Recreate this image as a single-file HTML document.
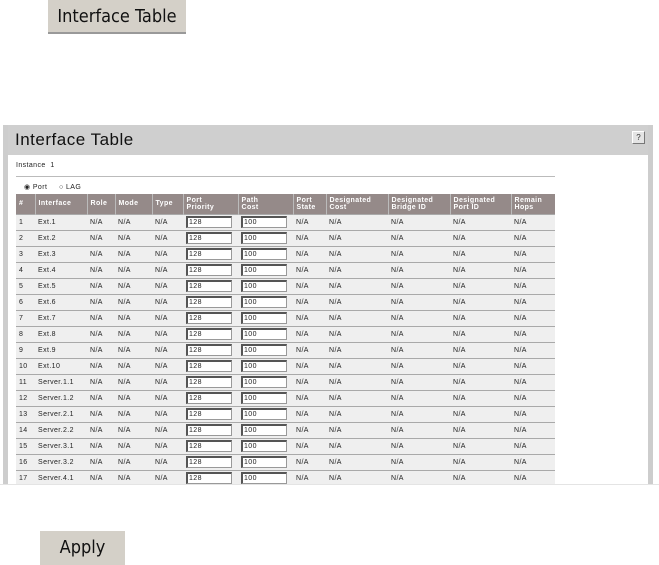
<!DOCTYPE html>
<html><head><style>
*{margin:0;padding:0;box-sizing:border-box}
body{width:659px;height:565px;background:#fff;position:relative;overflow:hidden;font-family:"Liberation Sans",sans-serif}
.btn{position:absolute;background:#d4d0c8;color:#111;font-family:"DejaVu Sans Condensed","Liberation Sans",sans-serif;text-align:center}
#panel{position:absolute;left:3px;top:125px;width:650px;height:359px;background:#fff;border-left:5px solid #cdcdcd;border-right:5px solid #cdcdcd;overflow:hidden}
#tbar{position:absolute;left:-5px;top:0;width:650px;height:30px;background:#cfcfcf}
#tbar span{position:absolute;left:12px;top:5px;font-size:17px;color:#111;letter-spacing:.5px}
#help{position:absolute;left:629px;top:6px;width:13px;height:13px;background:#e4e4e4;border:1px solid #fff;border-right-color:#777;border-bottom-color:#777;font-size:8px;text-align:center;line-height:11px;color:#333}
.sm{position:absolute;font-size:7px;color:#222;letter-spacing:.4px}
table{position:absolute;left:8px;top:69px;border-collapse:collapse;font-size:7px;color:#222;table-layout:fixed;letter-spacing:.4px}
th{background:#958a89;color:#fff;font-weight:bold;text-align:left;height:20px;padding:0 3px;line-height:7px;border-left:1px solid #bbb;vertical-align:middle}
th:first-child{border-left:none}
td{background:#efefef;height:16px;padding:0 3px;border-top:1px solid #a9a9a9;white-space:nowrap}
.in{display:block;width:46px;height:12px;background:#fff;border:1px solid #999;border-left:2px solid #555;border-top:2px solid #555;font-size:7px;line-height:9px;padding-left:1px}
</style></head><body>
<div class="btn" style="left:48px;top:0;width:138px;height:34px;font-size:18px;line-height:34px;border-bottom:2px solid #999">Interface Table</div>
<div id="panel">
<div id="tbar"><span>Interface Table</span><div id="help">?</div></div>
<div class="sm" style="left:8px;top:37px">Instance&nbsp;&nbsp;1</div>
<div style="position:absolute;left:8px;top:51px;width:539px;height:1px;background:#bbb"></div>
<div class="sm" style="left:16px;top:58px">◉ Port&nbsp;&nbsp;&nbsp;&nbsp;&nbsp;○ LAG</div>
<table>
<colgroup><col style="width:19px"><col style="width:52px"><col style="width:28px"><col style="width:37px"><col style="width:31px"><col style="width:55px"><col style="width:55px"><col style="width:33px"><col style="width:62px"><col style="width:62px"><col style="width:61px"><col style="width:44px"></colgroup>
<tr><th>#</th><th>Interface</th><th>Role</th><th>Mode</th><th>Type</th><th>Port<br>Priority</th><th>Path<br>Cost</th><th>Port<br>State</th><th>Designated<br>Cost</th><th>Designated<br>Bridge ID</th><th>Designated<br>Port ID</th><th>Remain<br>Hops</th></tr>
<tr><td>1</td><td>Ext.1</td><td>N/A</td><td>N/A</td><td>N/A</td><td><span class="in">128</span></td><td><span class="in">100</span></td><td>N/A</td><td>N/A</td><td>N/A</td><td>N/A</td><td>N/A</td></tr>
<tr><td>2</td><td>Ext.2</td><td>N/A</td><td>N/A</td><td>N/A</td><td><span class="in">128</span></td><td><span class="in">100</span></td><td>N/A</td><td>N/A</td><td>N/A</td><td>N/A</td><td>N/A</td></tr>
<tr><td>3</td><td>Ext.3</td><td>N/A</td><td>N/A</td><td>N/A</td><td><span class="in">128</span></td><td><span class="in">100</span></td><td>N/A</td><td>N/A</td><td>N/A</td><td>N/A</td><td>N/A</td></tr>
<tr><td>4</td><td>Ext.4</td><td>N/A</td><td>N/A</td><td>N/A</td><td><span class="in">128</span></td><td><span class="in">100</span></td><td>N/A</td><td>N/A</td><td>N/A</td><td>N/A</td><td>N/A</td></tr>
<tr><td>5</td><td>Ext.5</td><td>N/A</td><td>N/A</td><td>N/A</td><td><span class="in">128</span></td><td><span class="in">100</span></td><td>N/A</td><td>N/A</td><td>N/A</td><td>N/A</td><td>N/A</td></tr>
<tr><td>6</td><td>Ext.6</td><td>N/A</td><td>N/A</td><td>N/A</td><td><span class="in">128</span></td><td><span class="in">100</span></td><td>N/A</td><td>N/A</td><td>N/A</td><td>N/A</td><td>N/A</td></tr>
<tr><td>7</td><td>Ext.7</td><td>N/A</td><td>N/A</td><td>N/A</td><td><span class="in">128</span></td><td><span class="in">100</span></td><td>N/A</td><td>N/A</td><td>N/A</td><td>N/A</td><td>N/A</td></tr>
<tr><td>8</td><td>Ext.8</td><td>N/A</td><td>N/A</td><td>N/A</td><td><span class="in">128</span></td><td><span class="in">100</span></td><td>N/A</td><td>N/A</td><td>N/A</td><td>N/A</td><td>N/A</td></tr>
<tr><td>9</td><td>Ext.9</td><td>N/A</td><td>N/A</td><td>N/A</td><td><span class="in">128</span></td><td><span class="in">100</span></td><td>N/A</td><td>N/A</td><td>N/A</td><td>N/A</td><td>N/A</td></tr>
<tr><td>10</td><td>Ext.10</td><td>N/A</td><td>N/A</td><td>N/A</td><td><span class="in">128</span></td><td><span class="in">100</span></td><td>N/A</td><td>N/A</td><td>N/A</td><td>N/A</td><td>N/A</td></tr>
<tr><td>11</td><td>Server.1.1</td><td>N/A</td><td>N/A</td><td>N/A</td><td><span class="in">128</span></td><td><span class="in">100</span></td><td>N/A</td><td>N/A</td><td>N/A</td><td>N/A</td><td>N/A</td></tr>
<tr><td>12</td><td>Server.1.2</td><td>N/A</td><td>N/A</td><td>N/A</td><td><span class="in">128</span></td><td><span class="in">100</span></td><td>N/A</td><td>N/A</td><td>N/A</td><td>N/A</td><td>N/A</td></tr>
<tr><td>13</td><td>Server.2.1</td><td>N/A</td><td>N/A</td><td>N/A</td><td><span class="in">128</span></td><td><span class="in">100</span></td><td>N/A</td><td>N/A</td><td>N/A</td><td>N/A</td><td>N/A</td></tr>
<tr><td>14</td><td>Server.2.2</td><td>N/A</td><td>N/A</td><td>N/A</td><td><span class="in">128</span></td><td><span class="in">100</span></td><td>N/A</td><td>N/A</td><td>N/A</td><td>N/A</td><td>N/A</td></tr>
<tr><td>15</td><td>Server.3.1</td><td>N/A</td><td>N/A</td><td>N/A</td><td><span class="in">128</span></td><td><span class="in">100</span></td><td>N/A</td><td>N/A</td><td>N/A</td><td>N/A</td><td>N/A</td></tr>
<tr><td>16</td><td>Server.3.2</td><td>N/A</td><td>N/A</td><td>N/A</td><td><span class="in">128</span></td><td><span class="in">100</span></td><td>N/A</td><td>N/A</td><td>N/A</td><td>N/A</td><td>N/A</td></tr>
<tr><td>17</td><td>Server.4.1</td><td>N/A</td><td>N/A</td><td>N/A</td><td><span class="in">128</span></td><td><span class="in">100</span></td><td>N/A</td><td>N/A</td><td>N/A</td><td>N/A</td><td>N/A</td></tr>
</table>
</div>
<div style="position:absolute;left:0;top:484px;width:659px;height:1px;background:#e4e4e4"></div>
<div class="btn" style="left:40px;top:531px;width:85px;height:34px;font-size:18px;line-height:34px">Apply</div>
</body></html>
